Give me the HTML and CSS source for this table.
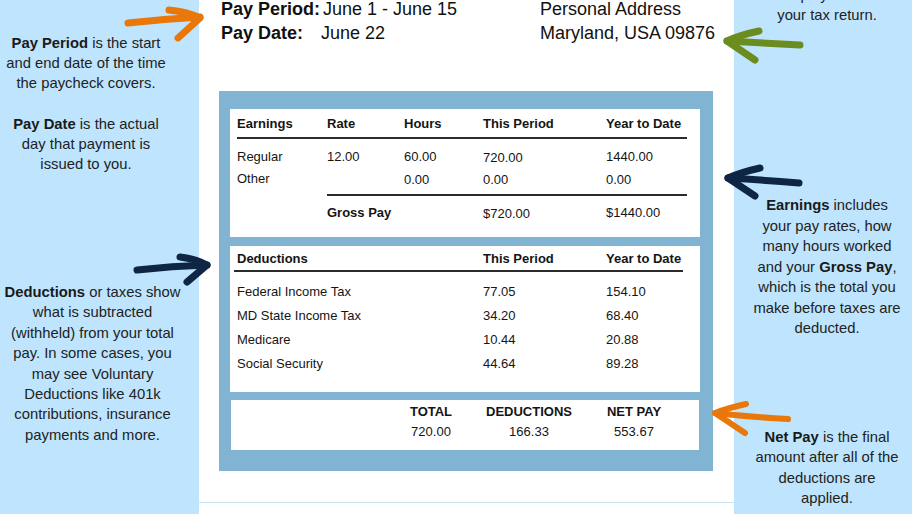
FILE: index.html
```html
<!DOCTYPE html>
<html>
<head>
<meta charset="utf-8">
<link rel="stylesheet" href="styles.css">
</head>
<body>
<div class="page">
  <aside class="side side-left">
    <p class="note note-period"><b>Pay Period</b> is the start<br>and end date of the time<br>the paycheck covers.</p>
    <p class="note note-date"><b>Pay Date</b> is the actual<br>day that payment is<br>issued to you.</p>
    <p class="note note-ded"><b>Deductions</b> or taxes show<br>what is subtracted<br>(withheld) from your total<br>pay. In some cases, you<br>may see Voluntary<br>Deductions like 401k<br>contributions, insurance<br>payments and more.</p>
  </aside>

  <main class="stub">
    <header class="stub-head">
      <div class="pay-info">
        <span class="lbl">Pay Period:</span><span class="val">June 1 - June 15</span>
        <span class="lbl">Pay Date:</span><span class="val val-date">June 22</span>
      </div>
      <div class="address">
        <div>Personal Address</div>
        <div>Maryland, USA 09876</div>
      </div>
    </header>

    <section class="frame">
      <div class="card earnings">
        <div class="row e-row head">
          <span>Earnings</span><span>Rate</span><span>Hours</span><span>This Period</span><span>Year to Date</span>
        </div>
        <div class="e-body">
          <div class="row e-row"><span>Regular</span><span>12.00</span><span>60.00</span><span class="low">720.00</span><span>1440.00</span></div>
          <div class="row e-row"><span>Other</span><span></span><span class="low">0.00</span><span class="low">0.00</span><span class="low">0.00</span></div>
        </div>
        <div class="e-rule"></div>
        <div class="row e-row gross"><span></span><span class="strong">Gross Pay</span><span></span><span class="low">$720.00</span><span>$1440.00</span></div>
      </div>

      <div class="card deductions">
        <div class="row d-row head">
          <span>Deductions</span><span>This Period</span><span>Year to Date</span>
        </div>
        <div class="d-body">
          <div class="row d-row"><span>Federal Income Tax</span><span>77.05</span><span>154.10</span></div>
          <div class="row d-row"><span>MD State Income Tax</span><span>34.20</span><span>68.40</span></div>
          <div class="row d-row"><span>Medicare</span><span>10.44</span><span>20.88</span></div>
          <div class="row d-row"><span>Social Security</span><span>44.64</span><span>89.28</span></div>
        </div>
      </div>

      <div class="card totals">
        <div class="t-grid">
          <span class="strong">TOTAL</span><span class="strong">DEDUCTIONS</span><span class="strong">NET PAY</span>
          <span>720.00</span><span>166.33</span><span>553.67</span>
        </div>
      </div>
    </section>
    <div class="bottom-rule"></div>
  </main>

  <aside class="side side-right">
    <p class="note note-tax">Your employer uses it on<br>your tax return.</p>
    <p class="note note-earn"><b>Earnings</b> includes<br>your pay rates, how<br>many hours worked<br>and your <b>Gross Pay</b>,<br>which is the total you<br>make before taxes are<br>deducted.</p>
    <p class="note note-net"><b>Net Pay</b> is the final<br>amount after all of the<br>deductions are<br>applied.</p>
  </aside>

  <svg class="arrows" width="912" height="514" viewBox="0 0 912 514" aria-hidden="true">
    <g fill="none" stroke-linecap="round" stroke-linejoin="round">
      <g stroke="#e97709">
        <path d="M128 23 Q165 19 200 17" stroke-width="7"/>
        <path d="M169 10 Q188 12 200 18 L178 38" stroke-width="7"/>
        <path d="M788 419 Q750 417 715 413" stroke-width="6"/>
        <path d="M746 404 Q728 408 715 413 L745 433" stroke-width="6"/>
      </g>
      <g stroke="#6b8d1f">
        <path d="M800 45 Q765 43 727 41" stroke-width="7"/>
        <path d="M759 31 Q740 35 727 41 L755 60" stroke-width="7"/>
      </g>
      <g stroke="#0f2544">
        <path d="M137 270 Q172 266 207 265" stroke-width="7"/>
        <path d="M180 257 Q196 259 207 265 L187 282" stroke-width="7"/>
        <path d="M799 183 Q763 180 728 178" stroke-width="7"/>
        <path d="M760 168 Q742 172 728 178 L755 196" stroke-width="7"/>
      </g>
    </g>
  </svg>
</div>
</body>
</html>
```

FILE: styles.css
```css
* {
  box-sizing: border-box;
}

html, body {
  margin: 0;
  padding: 0;
  background: #ffffff;
}

body {
  font-family: "Liberation Sans", Arial, sans-serif;
  color: #1f1f1f;
}

.page {
  position: relative;
  display: flex;
  width: 912px;
  height: 514px;
  overflow: hidden;
}

.side {
  background: #bee5fd;
  flex: none;
  height: 514px;
}

.side-left {
  width: 199px;
  padding-top: 33px;
}

.side-right {
  width: 178px;
  padding-left: 8px;
}

.note {
  margin: 0;
  font-size: 14.8px;
  line-height: 20px;
  text-align: center;
  color: #222;
  white-space: nowrap;
}

.note b {
  font-weight: 700;
  color: #1a1a1a;
}

.note-period {
  width: 172px;
}

.note-date {
  width: 172px;
  margin-top: 21px;
}

.note-ded {
  width: 183px;
  margin-top: 108px;
  margin-left: 1px;
  line-height: 20.4px;
}

.note-tax {
  margin-top: -15px;
}

.note-earn {
  margin-top: 170px;
  line-height: 20.5px;
}

.note-net {
  margin-top: 88px;
  line-height: 20.5px;
}

.stub {
  flex: none;
  width: 535px;
  height: 514px;
  display: flex;
  flex-direction: column;
}

.stub-head {
  display: flex;
  margin-top: -3px;
  font-size: 18px;
  line-height: 24px;
  color: #111;
  white-space: nowrap;
}

.pay-info {
  display: grid;
  grid-template-columns: 100px auto;
  width: 341px;
  padding-left: 22px;
}

.pay-info .lbl {
  font-weight: 700;
}

.pay-info .val {
  margin-left: 2px;
}

.pay-info .val-date {
  margin-left: 0;
}

.address {
  flex: 1;
}

.frame {
  margin-top: 46px;
  margin-left: 20px;
  width: 494px;
  height: 380px;
  background: #81b3d2;
  padding: 18px 13px 0 11px;
  display: flex;
  flex-direction: column;
}

.card {
  background: #ffffff;
  font-size: 13px;
  color: #151515;
}

.row {
  white-space: nowrap;
}

.strong {
  font-weight: 700;
}

.head {
  font-weight: 700;
}

.earnings {
  height: 128px;
  padding: 5px 13px 0 7px;
}

.e-row {
  display: grid;
  grid-template-columns: 90px 77px 79px 123px 1fr;
  line-height: 20px;
}

.e-row.head {
  padding-bottom: 3px;
  border-bottom: 2px solid #2b2b2b;
}

.e-body {
  margin-top: 7px;
}

.e-body .e-row {
  line-height: 22px;
}

.low {
  position: relative;
  top: 1px;
}

.e-rule {
  margin-top: 4px;
  margin-left: 90px;
  border-top: 2px solid #2b2b2b;
}

.gross {
  margin-top: 6px;
  line-height: 22px;
}

.deductions {
  margin-top: 9px;
  height: 146px;
  padding: 3px 17px 0 4px;
}

.d-row {
  display: grid;
  grid-template-columns: 246px 123px 1fr;
  padding-left: 3px;
  line-height: 20px;
}

.d-row.head {
  padding-bottom: 1px;
  border-bottom: 2px solid #2b2b2b;
}

.d-body {
  margin-top: 8px;
}

.d-body .d-row {
  line-height: 24px;
}

.totals {
  margin: 8px 1px 0 1px;
  height: 50px;
  padding: 2px 0 0 169px;
}

.t-grid {
  display: grid;
  grid-template-columns: 62px 134px 76px;
  text-align: center;
  line-height: 20px;
  font-size: 13px;
  white-space: nowrap;
}

.bottom-rule {
  margin-top: 31px;
  border-top: 1px solid #c9e4f5;
}

.arrows {
  position: absolute;
  left: 0;
  top: 0;
  pointer-events: none;
}
```
